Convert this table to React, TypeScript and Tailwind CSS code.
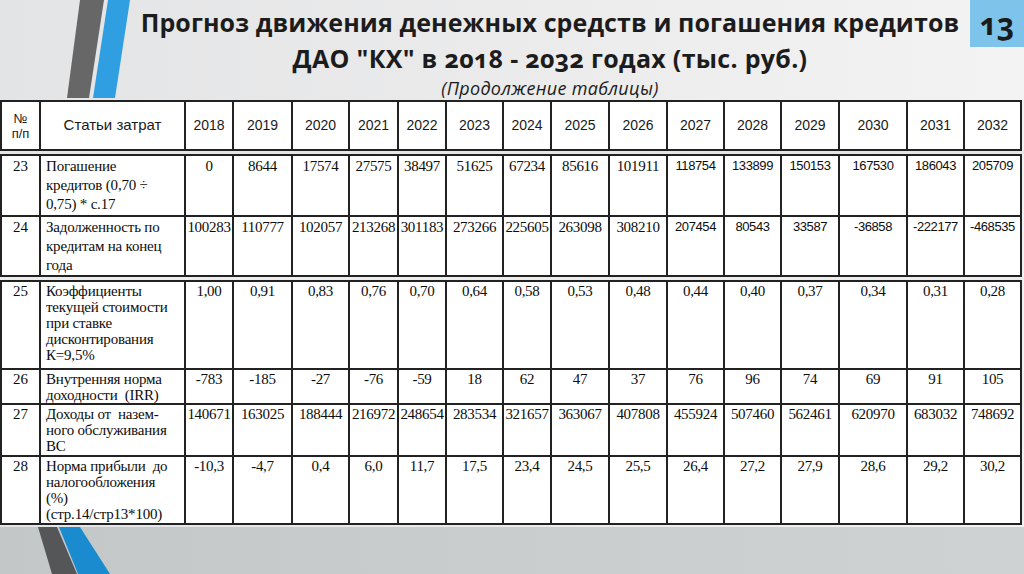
import type { ReactNode } from "react";

const years = ["2018", "2019", "2020", "2021", "2022", "2023", "2024", "2025", "2026", "2027", "2028", "2029", "2030", "2031", "2032"];

const colW = ["w-[39px]", "w-[145px]", "w-[48px]", "w-[59px]", "w-[57px]", "w-[49px]", "w-[48px]", "w-[57px]", "w-[48px]", "w-[58px]", "w-[58px]", "w-[57px]", "w-[57px]", "w-[58px]", "w-[68px]", "w-[57px]", "w-[57px]"];

type Row = {
  n: string;
  name: string[];
  vals: string[];
  h: string;
  sansFrom?: number;
};

const topRows: Row[] = [
  {
    n: "23",
    name: ["Погашение", "кредитов (0,70 ÷", "0,75) * с.17"],
    vals: ["0", "8644", "17574", "27575", "38497", "51625", "67234", "85616", "101911", "118754", "133899", "150153", "167530", "186043", "205709"],
    h: "h-[61px]",
    sansFrom: 9,
  },
  {
    n: "24",
    name: ["Задолженность по", "кредитам на конец", "года"],
    vals: ["100283", "110777", "102057", "213268", "301183", "273266", "225605", "263098", "308210", "207454", "80543", "33587", "-36858", "-222177", "-468535"],
    h: "h-[58px]",
    sansFrom: 9,
  },
];

const bottomRows: Row[] = [
  {
    n: "25",
    name: ["Коэффициенты", "текущей стоимости", "при ставке", "дисконтирования", "К=9,5%"],
    vals: ["1,00", "0,91", "0,83", "0,76", "0,70", "0,64", "0,58", "0,53", "0,48", "0,44", "0,40", "0,37", "0,34", "0,31", "0,28"],
    h: "h-[88px]",
  },
  {
    n: "26",
    name: ["Внутренняя норма", "доходности  (IRR)"],
    vals: ["-783", "-185", "-27", "-76", "-59", "18", "62", "47", "37", "76", "96", "74", "69", "91", "105"],
    h: "h-[35px]",
  },
  {
    n: "27",
    name: ["Доходы от  назем-", "ного обслуживания", "ВС"],
    vals: ["140671", "163025", "188444", "216972", "248654", "283534", "321657", "363067", "407808", "455924", "507460", "562461", "620970", "683032", "748692"],
    h: "h-[52px]",
  },
  {
    n: "28",
    name: ["Норма прибыли  до", "налогообложения", "(%)", "(стр.14/стр13*100)"],
    vals: ["-10,3", "-4,7", "0,4", "6,0", "11,7", "17,5", "23,4", "24,5", "25,5", "26,4", "27,2", "27,9", "28,6", "29,2", "30,2"],
    h: "h-[68px]",
  },
];

function Cols() {
  return (
    <colgroup>
      {colW.map((w, i) => (
        <col key={i} className={w} />
      ))}
    </colgroup>
  );
}

function Td({ children, className = "" }: { children: ReactNode; className?: string }) {
  return <td className={`border-2 border-[#222] align-top p-0 overflow-visible ${className}`}>{children}</td>;
}

function DataTable({ rows, big }: { rows: Row[]; big?: boolean }) {
  const txt = big ? "text-[15px] leading-[19px]" : "text-[15px] leading-[16px]";
  return (
    <table className="table-fixed border-collapse w-[1021px] bg-white text-[#0d0d0d] font-['Liberation_Serif',serif]">
      <Cols />
      <tbody>
        {rows.map((r) => (
          <tr key={r.n} className={r.h}>
            <Td className={`text-center ${txt} pt-[1px]`}>{r.n}</Td>
            <Td className={`pl-[5px] ${txt} pt-[1px] whitespace-pre tracking-[-0.2px]`}>
              {r.name.map((l, i) => (
                <div key={i}>{l}</div>
              ))}
            </Td>
            {r.vals.map((v, i) => (
              <Td
                key={i}
                className={`text-center whitespace-nowrap pt-[1px] ${
                  r.sansFrom !== undefined && i >= r.sansFrom
                    ? "font-['Liberation_Sans',sans-serif] text-[13px] leading-[18px] tracking-[-0.4px]"
                    : `${txt} tracking-[-0.3px]`
                }`}
              >
                {v}
              </Td>
            ))}
          </tr>
        ))}
      </tbody>
    </table>
  );
}

export default function App() {
  return (
    <div className="relative w-[1024px] h-[574px] overflow-hidden bg-gradient-to-r from-[#e3e4e5] via-[#ebebec] to-[#f3f3f3] font-['Open_Sans',sans-serif]">
      {/* decorative stripes, top */}
      <svg className="absolute left-0 top-0" width="140" height="100" viewBox="0 0 140 100">
        <polygon points="80,0 104,0 89,98 67,98" fill="#676767" />
        <polygon points="108,0 130,0 115,98 93,98" fill="#2f9fe2" />
      </svg>

      {/* page number */}
      <div className="absolute right-0 top-0 w-[54px] h-[47px] bg-[#7dc3ea] flex items-center justify-center">
        <span className="text-[30px] font-bold text-[#1a1a1a] leading-none [font-variant-numeric:oldstyle-nums]">13</span>
      </div>

      {/* title */}
      <div className="relative h-[100px] pl-[76px] pt-[4px] text-center text-[#1c1c1c]">
        <div className="text-[25px] font-bold leading-[36px] tracking-[0.1px] [font-variant-numeric:oldstyle-nums]">
          Прогноз движения денежных средств и погашения кредитов
        </div>
        <div className="text-[25px] font-bold leading-[36px] tracking-[0.3px] [font-variant-numeric:oldstyle-nums]">
          ДАО "КХ" в 2018 - 2032 годах (тыс. руб.)
        </div>
        <div className="text-[18px] italic leading-[24px] tracking-[0.3px]">(Продолжение таблицы)</div>
      </div>

      {/* tables */}
      <div className="relative bg-[#f1f1f1] flex flex-col">
        <table className="table-fixed border-collapse w-[1020px] bg-white text-[#1a1a1a] font-['Liberation_Sans',sans-serif]">
          <Cols />
          <tbody>
            <tr className="h-[49px]">
              <td className="border-2 border-[#222] text-center text-[13px] leading-[15px] align-middle">
                №
                <br />
                п/п
              </td>
              <td className="border-2 border-[#222] text-center text-[15px] align-middle">Статьи затрат</td>
              {years.map((y) => (
                <td key={y} className="border-2 border-[#222] text-center text-[14px] align-middle">
                  {y}
                </td>
              ))}
            </tr>
          </tbody>
        </table>
        <div className="h-[3px] bg-[#e6e6e6]" />
        <DataTable rows={topRows} big />
        <div className="h-[3px] bg-[#ececec]" />
        <DataTable rows={bottomRows} />
      </div>

      {/* bottom band */}
      <div className="absolute left-0 bottom-0 w-full h-[47px] bg-gradient-to-r from-[#c3c7c8] via-[#c9cdce] to-[#cfd2d3]">
        <svg className="absolute left-0 top-0" width="120" height="47" viewBox="0 0 120 47">
          <polygon points="38,0 57,0 77,47 52,47" fill="#555657" />
          <polygon points="59,0 80,0 110,47 78,47" fill="#1b8bd0" />
        </svg>
      </div>
    </div>
  );
}
